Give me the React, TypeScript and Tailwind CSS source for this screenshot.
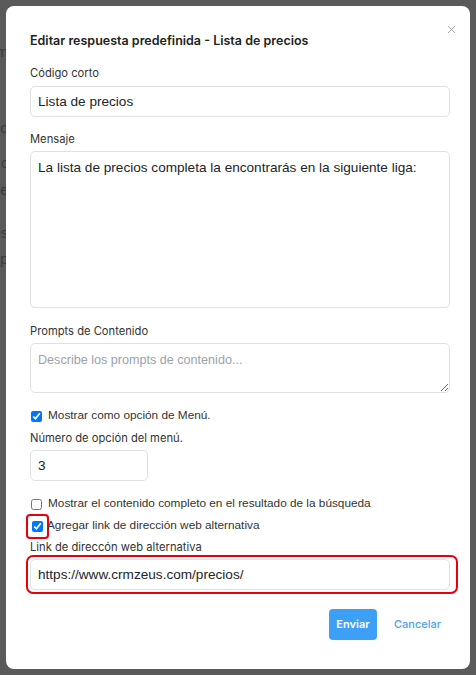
import { X } from "lucide-react";

const sans = "font-['Inter','Liberation_Sans',sans-serif]";
const arial = "font-['Liberation_Sans','Arial',sans-serif]";

// fragments of the page behind the dimmed overlay
const behind = [
  { text: "m", top: "mt-[44px]" },
  { text: "co", top: "mt-[60px]" },
  { text: "c", top: "mt-[19px]" },
  { text: "e", top: "mt-[11px]" },
  { text: "es", top: "mt-[27px]" },
  { text: "up", top: "mt-[10px]" },
];

const Label = ({ children, className = "" }: { children: React.ReactNode; className?: string }) => (
  <label className={`block text-[11.2px] leading-4 text-[#333] ${sans} ${className}`}>{children}</label>
);

const inputCls = `rounded-[5px] border border-[#dee2e6] bg-white px-[7px] text-[13.6px] text-[#212529] outline-none ${arial}`;

export default function App() {
  return (
    <div className="relative h-[675px] w-[476px] overflow-hidden bg-[#5a5a5a]">
      <div className={`flex w-[8px] flex-col items-end overflow-hidden text-[14px] leading-4 text-[#3a3a3a] ${arial}`}>
        {behind.map((b, i) => (
          <div key={i} className={`${b.top} flex justify-end whitespace-nowrap`}>
            {b.text}
          </div>
        ))}
      </div>

      <div className="absolute left-[6px] top-[6px] flex h-[663px] w-[464px] flex-col rounded-[8px] bg-white pl-[24px] pr-[20px] pt-[25px]">
        <button className="absolute right-[12px] top-[17px] text-[#7a7f85]">
          <X className="h-[13px] w-[13px]" strokeWidth={1.3} />
        </button>

        <h2 className={`text-[12.5px] font-semibold leading-5 text-[#222] ${sans}`}>
          Editar respuesta predefinida - Lista de precios
        </h2>

        <Label className="mt-[14px]">Código corto</Label>
        <input className={`${inputCls} mt-[5px] h-[31px] w-full`} defaultValue="Lista de precios" />

        <Label className="mt-[14px]">Mensaje</Label>
        <textarea
          className={`${inputCls} mt-[4px] h-[157px] w-full resize-none pt-[6px] leading-5`}
          defaultValue="La lista de precios completa la encontrarás en la siguiente liga:"
        />

        <Label className="mt-[15px]">Prompts de Contenido</Label>
        <textarea
          className={`${inputCls} mt-[4px] h-[50px] w-full pt-[6px] leading-5 placeholder:text-[12.6px] placeholder:text-[#9aa3ad]`}
          placeholder="Describe los prompts de contenido..."
        />

        <div className={`mt-[15px] flex h-4 items-center gap-[6px] text-[11.8px] text-[#333] ${arial}`}>
          <input type="checkbox" defaultChecked className="m-0 ml-[1px] h-[11px] w-[11px]" />
          <span>Mostrar como opción de Menú.</span>
        </div>

        <Label className="mt-[6px]">Número de opción del menú.</Label>
        <input className={`${inputCls} mt-[4px] h-[31px] w-[118px]`} defaultValue="3" />

        <div className={`mt-[15px] flex h-4 items-center gap-[6px] text-[11.8px] text-[#333] ${arial}`}>
          <input type="checkbox" className="m-0 ml-[1px] h-[11px] w-[11px]" />
          <span>Mostrar el contenido completo en el resultado de la búsqueda</span>
        </div>

        <div className={`mt-[6px] flex h-4 items-center text-[11.8px] text-[#333] ${arial}`}>
          <div className="-ml-[4px] flex h-[25px] w-[23px] items-center justify-center rounded-[4px] border-2 border-[#e8000b]">
            <input type="checkbox" defaultChecked className="m-0 h-[11px] w-[11px]" />
          </div>
          <span className="-ml-[2px]">Agregar link de dirección web alternativa</span>
        </div>

        <Label className="mt-[5px]">Link de direccón web alternativa</Label>
        <div className="-ml-[4px] -mr-[8px] rounded-[7px] border-2 border-[#e8000b] py-[2px] pl-[2px] pr-[6px]">
          <input
            className={`${inputCls} h-[31px] w-full border-[#86b7fe]`}
            defaultValue="https://www.crmzeus.com/precios/"
          />
        </div>

        <div className="mt-[15px] flex items-center justify-end gap-[17px] pr-[9px]">
          <button className={`h-[31px] w-[48px] rounded-[4px] bg-[#3d9ff5] text-[11px] font-semibold text-white ${sans}`}>
            Enviar
          </button>
          <button className={`text-[11px] font-medium text-[#4aa3f0] ${sans}`}>Cancelar</button>
        </div>
      </div>
    </div>
  );
}
